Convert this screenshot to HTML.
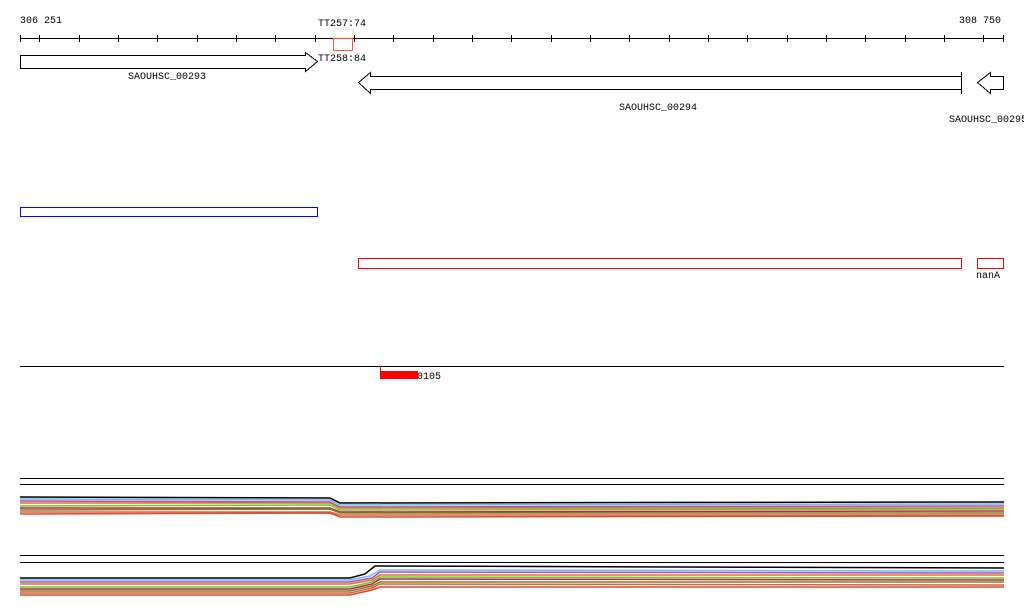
<!DOCTYPE html>
<html><head><style>body{margin:0;background:#fff}svg{display:block}text{font-family:"Liberation Mono",monospace;font-size:10px;fill:#000}</style></head><body>
<svg width="1024" height="611" xmlns="http://www.w3.org/2000/svg" shape-rendering="crispEdges">
<text x="20" y="23">306 251</text>
<text x="318" y="26">TT257:74</text>
<text x="959" y="23">308 750</text>
<rect x="334" y="29" width="19" height="9" fill="none" stroke="#f4d8c8"/>
<line x1="20" y1="38.5" x2="1004" y2="38.5" stroke="#000"/>
<g stroke="#000">
<line x1="20.5" y1="35" x2="20.5" y2="42"/>
<path d="M39.5 35v7M79.5 35v7M118.5 35v7M157.5 35v7M197.5 35v7M236.5 35v7M275.5 35v7M315.5 35v7M354.5 35v7M393.5 35v7M433.5 35v7M472.5 35v7M511.5 35v7M551.5 35v7M590.5 35v7M629.5 35v7M669.5 35v7M708.5 35v7M747.5 35v7M787.5 35v7M826.5 35v7M865.5 35v7M905.5 35v7M944.5 35v7M983.5 35v7M1003.5 35v7"/>
</g>
<rect x="333.5" y="38.5" width="19" height="12" fill="none" stroke="#f06040"/>
<path d="M20.5 55.5H305.5V52.5L317.5 61.5L305.5 71.5V68.5H20.5Z" fill="#fff" stroke="#000"/>
<text x="318" y="61">TT258:84</text>
<text x="128" y="79">SAOUHSC_00293</text>
<path d="M961.5 76.5H370.5V72.5L358.5 82.5L370.5 93.5V89.5H961.5Z" fill="#fff" stroke="#000"/>
<line x1="961.5" y1="72" x2="961.5" y2="94" stroke="#000"/>
<path d="M1003.5 76.5H990.5V72.5L977.5 82.5L990.5 93.5V89.5H1003.5Z" fill="#fff" stroke="#000"/>
<text x="619" y="110">SAOUHSC_00294</text>
<text x="949" y="122">SAOUHSC_00295</text>
<rect x="20.5" y="207.5" width="297" height="9" fill="none" stroke="#0000ff"/>
<rect x="358.5" y="258.5" width="603" height="10" fill="none" stroke="#f00"/>
<rect x="977.5" y="258.5" width="26" height="10" fill="none" stroke="#f00"/>
<text x="976" y="278">nanA</text>
<line x1="20" y1="366.5" x2="1004" y2="366.5" stroke="#000"/>
<rect x="380" y="371" width="38" height="8" fill="#f00"/>
<line x1="380.5" y1="366" x2="380.5" y2="379" stroke="#f00"/>
<text x="417" y="379">0105</text>
<line x1="20" y1="478.5" x2="1004" y2="478.5" stroke="#000"/>
<line x1="20" y1="484.5" x2="1004" y2="484.5" stroke="#000"/>
<g fill="none" stroke-width="1.5" shape-rendering="auto">
<polyline points="20,497 330,498 340,503 1004,502" stroke="#000"/>
<polyline points="20,499 330,500 340,505 1004,504" stroke="#70b8f0"/>
<polyline points="20,501 330,502 340,507 1004,506" stroke="#b050b0"/>
<polyline points="20,503 330,503 340,508 1004,508" stroke="#e07030"/>
<polyline points="20,506 330,505 340,510 1004,509" stroke="#60d020"/>
<polyline points="20,508 330,508 340,512 1004,511" stroke="#c02050"/>
<polyline points="20,510 330,509 340,513 1004,513" stroke="#808020"/>
<polyline points="20,512 330,512 340,515 1004,515" stroke="#e06040"/>
<polyline points="20,514 330,513 340,517 1004,516" stroke="#d05030"/>
</g>
<line x1="20" y1="555.5" x2="1004" y2="555.5" stroke="#000"/>
<line x1="20" y1="562.5" x2="1004" y2="562.5" stroke="#000"/>
<g fill="none" stroke-width="1.5" shape-rendering="auto">
<polyline points="20,578 350,578 365,574 375,566 1004,568" stroke="#000"/>
<polyline points="20,580 350,580 370,576 380,570 1004,571" stroke="#70b8f0"/>
<polyline points="20,582 350,582 372,578 380,572 1004,573" stroke="#b050b0"/>
<polyline points="20,584 350,584 372,580 380,575 1004,575" stroke="#e07030"/>
<polyline points="20,587 350,587 372,582 380,577 1004,578" stroke="#60d020"/>
<polyline points="20,589 350,589 372,584 380,579 1004,580" stroke="#c02050"/>
<polyline points="20,591 350,591 372,586 380,582 1004,582" stroke="#808020"/>
<polyline points="20,593 350,593 372,588 380,584 1004,585" stroke="#e06040"/>
<polyline points="20,595 350,595 372,590 380,587 1004,587" stroke="#d05030"/>
</g>
</svg>
</body></html>
